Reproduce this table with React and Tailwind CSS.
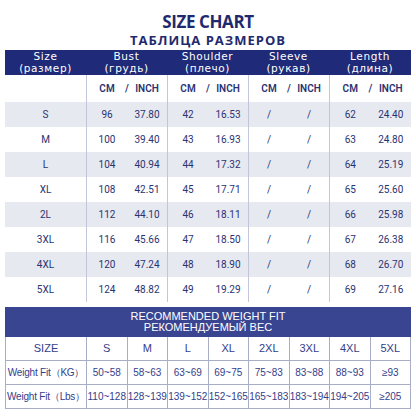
const sizes = [
    {s: 'S', b: ['96', '37.80'], sh: ['42', '16.53'], l: ['62', '24.40']},
    {s: 'M', b: ['100', '39.40'], sh: ['43', '16.93'], l: ['63', '24.80']},
    {s: 'L', b: ['104', '40.94'], sh: ['44', '17.32'], l: ['64', '25.19']},
    {s: 'XL', b: ['108', '42.51'], sh: ['45', '17.71'], l: ['65', '25.60']},
    {s: '2L', b: ['112', '44.10'], sh: ['46', '18.11'], l: ['66', '25.98']},
    {s: '3XL', b: ['116', '45.66'], sh: ['47', '18.50'], l: ['67', '26.38']},
    {s: '4XL', b: ['120', '47.24'], sh: ['48', '18.90'], l: ['68', '26.70']},
    {s: '5XL', b: ['124', '48.82'], sh: ['49', '19.29'], l: ['69', '27.16']},
]

const heads = [
    ['Size', '(размер)'],
    ['Bust', '(грудь)'],
    ['Shoulder', '(плечо)'],
    ['Sleeve', '(рукав)'],
    ['Length', '(длина)'],
]

const weight = [
    ['SIZE', 'S', 'M', 'L', 'XL', '2XL', '3XL', '4XL', '5XL'],
    ['Weight Fit（KG）', '50~58', '58~63', '63~69', '69~75', '75~83', '83~88', '88~93', '≥93'],
    ['Weight Fit（Lbs）', '110~128', '128~139', '139~152', '152~165', '165~183', '183~194', '194~205', '≥205'],
]

const narrow = "font-['Liberation_Sans_Narrow','Roboto',sans-serif]"
const cols = 'grid grid-cols-[81px_81px_81px_81px_82px]'

function Pair({a, b, mid}) {
    return (
        <div className="grid h-full grid-cols-2 items-center border-l border-[#c3c6da] relative">
            <span className="text-center">{a}</span>
            {mid ? <span className="absolute left-1/2 -translate-x-1/2">/</span> : null}
            <span className="text-center">{b}</span>
        </div>
    )
}

export default function App() {
    return (
        <div className="w-[416px] h-[416px] bg-white px-[5px] overflow-hidden">
            <div className="pt-[11px] text-center text-[#1f2a6e] font-['Open_Sans',sans-serif]">
                <div className="text-[17px] font-bold leading-[21px] tracking-[-0.4px]">SIZE CHART</div>
                <div className="text-[13px] font-bold leading-[16px] tracking-[1px]">ТАБЛИЦА РАЗМЕРОВ</div>
            </div>

            <div className={`${cols} mt-[2px] h-[25px] bg-[#1f2a78] text-white font-['DejaVu_Sans',sans-serif] text-[10.5px] leading-[11.5px] tracking-[0.6px]`}>
                {heads.map(([a, b]) => (
                    <div key={a} className="flex flex-col items-center justify-center">
                        <span>{a}</span>
                        <span>{b}</span>
                    </div>
                ))}
            </div>

            <div className={`${cols} h-[27px] text-[10px] font-semibold text-[#2a3372] ${narrow}`}>
                <div/>
                {[0, 1, 2, 3].map((i) => (
                    <Pair key={i} a="CM" b="INCH" mid/>
                ))}
            </div>

            {sizes.map((r, i) => (
                <div key={r.s} className={`${cols} h-[25px] text-[10px] text-[#2a3372] ${narrow} ${i % 2 === 0 ? 'bg-[#e7e9f0]' : ''}`}>
                    <div className="flex items-center justify-center">{r.s}</div>
                    <Pair a={r.b[0]} b={r.b[1]}/>
                    <Pair a={r.sh[0]} b={r.sh[1]}/>
                    <Pair a="/" b="/"/>
                    <Pair a={r.l[0]} b={r.l[1]}/>
                </div>
            ))}

            <div className="mt-[5px] h-[30px] bg-[#3a4591] text-white font-['Liberation_Sans',sans-serif] text-[11px] leading-[11px] flex flex-col items-center justify-center">
                <span>RECOMMENDED WEIGHT FIT</span>
                <span>РЕКОМЕНДУЕМЫЙ ВЕС</span>
            </div>

            <div className="border-l border-[#a9adc6] font-['Liberation_Sans',sans-serif] text-[#34408a]">
                {weight.map((row, ri) => (
                    <div key={ri} className="grid grid-cols-[81px_repeat(8,1fr)] h-[24px]">
                        {row.map((c, ci) => (
                            <div
                                key={ci}
                                className={`flex items-center justify-center border-r border-b border-[#a9adc6] whitespace-nowrap ${ri === 0 ? 'text-[11px]' : 'text-[10px]'} ${ci === 0 && ri > 0 ? 'tracking-[-0.2px]' : ''}`}
                            >
                                {c}
                            </div>
                        ))}
                    </div>
                ))}
            </div>
        </div>
    )
}
